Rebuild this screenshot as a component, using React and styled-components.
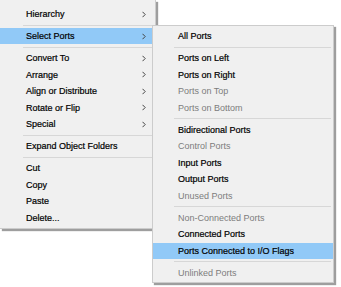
import React from 'react';
import styled, {createGlobalStyle} from 'styled-components';

const GlobalStyle = createGlobalStyle`
    html, body {
        margin: 0;
        background: #ffffff;
    }
    body {
        font-family: "Liberation Sans", Arial, sans-serif;
        font-size: 9px;
    }
`

const Canvas = styled.div`
    position: relative;
    width: 341px;
    height: 287px;
    overflow: hidden;
`

const Menu = styled.ul`
    list-style: none;
    margin: 0;
    box-sizing: border-box;
    width: ${p => p.$width}px;
    padding: ${p => p.$padTop}px 0 ${p => p.$padBottom}px;
    background: #f0f0f0;
    border: 1px solid #cccccc;
    ${p => p.$cut && 'border-top: none; border-left: none;'}
    box-shadow: 2px 2px 1px rgba(0, 0, 0, 0.38);
`

const SubMenu = styled(Menu)`
    position: absolute;
    left: 152px;
    top: 25px;
`

const Item = styled.li`
    display: flex;
    align-items: center;
    justify-content: space-between;
    height: 16.5px;
    padding: 0 9px 0 ${p => p.$indent}px;
    color: ${p => p.$disabled ? '#7d7d7d' : '#000000'};
    background: ${p => p.$active ? '#91c9f7' : 'transparent'};
    -webkit-text-stroke: ${p => p.$disabled ? '0' : '0.2px'};
    white-space: nowrap;
`

const Separator = styled.li`
    height: 5.5px;
    display: flex;
    align-items: center;
    padding: 0 2px 0 ${p => p.$indent}px;

    &::after {
        content: "";
        flex: 1;
        height: 1px;
        background: #d7d7d7;
    }
`

const Arrow = () => (
    <svg width="4" height="7" viewBox="0 0 4 7">
        <polyline points="0.5,0.8 3.2,3.5 0.5,6.2" fill="none" stroke="#444" strokeWidth="1" />
    </svg>
)

const mainItems = [
    {label: 'Hierarchy', sub: true},
    '-',
    {label: 'Select Ports', sub: true, active: true},
    '-',
    {label: 'Convert To', sub: true},
    {label: 'Arrange', sub: true},
    {label: 'Align or Distribute', sub: true},
    {label: 'Rotate or Flip', sub: true},
    {label: 'Special', sub: true},
    '-',
    {label: 'Expand Object Folders'},
    '-',
    {label: 'Cut'},
    {label: 'Copy'},
    {label: 'Paste'},
    {label: 'Delete...'},
]

const portItems = [
    {label: 'All Ports'},
    '-',
    {label: 'Ports on Left'},
    {label: 'Ports on Right'},
    {label: 'Ports on Top', disabled: true},
    {label: 'Ports on Bottom', disabled: true},
    '-',
    {label: 'Bidirectional Ports'},
    {label: 'Control Ports', disabled: true},
    {label: 'Input Ports'},
    {label: 'Output Ports'},
    {label: 'Unused Ports', disabled: true},
    '-',
    {label: 'Non-Connected Ports', disabled: true},
    {label: 'Connected Ports'},
    {label: 'Ports Connected to I/O Flags', active: true},
    '-',
    {label: 'Unlinked Ports', disabled: true},
]

function MenuItems({items, indent, sepIndent}) {
    return items.map((item, index) =>
        item === '-'
            ? <Separator key={index} $indent={sepIndent} />
            : <Item key={index} $indent={indent} $disabled={item.disabled} $active={item.active}>
                <span>{item.label}</span>
                {item.sub && <Arrow />}
              </Item>
    )
}

function App() {
    return (
        <Canvas>
            <GlobalStyle />
            <Menu $width={156} $padTop={5.75} $padBottom={2} $cut>
                <MenuItems items={mainItems} indent={26} sepIndent={23} />
            </Menu>
            <SubMenu $width={182} $padTop={2} $padBottom={1}>
                <MenuItems items={portItems} indent={25} sepIndent={21} />
            </SubMenu>
        </Canvas>
    )
}

export default App
